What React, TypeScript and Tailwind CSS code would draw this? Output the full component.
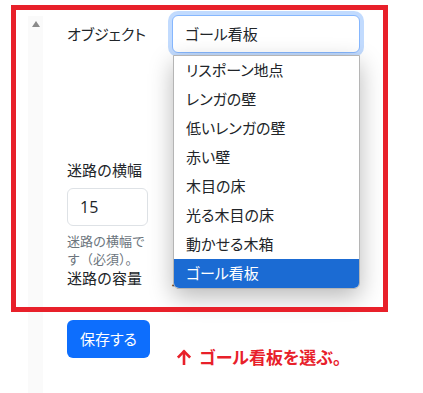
const items = [
  "リスポーン地点",
  "レンガの壁",
  "低いレンガの壁",
  "赤い壁",
  "木目の床",
  "光る木目の床",
  "動かせる木箱",
  "ゴール看板",
];

export default function App() {
  return (
    <div
      className="relative w-[423px] h-[393px] bg-white overflow-hidden text-[#212529]"
      style={{ fontFamily: '"Noto Sans CJK JP", "Noto Sans", sans-serif' }}
    >
      {/* scrollbar strip */}
      <div className="absolute left-[28px] top-[16px] bottom-0 w-[15px] bg-[#fafafa] flex justify-center pt-[5px]">
        <div className="w-0 h-0 border-l-[4px] border-r-[4px] border-b-[6px] border-l-transparent border-r-transparent border-b-[#8a8a8a]" />
      </div>

      <div className="flex flex-col pl-[67px] pt-[15px]">
        {/* object select */}
        <div className="flex items-center h-[38px]">
          <div className="w-[105px] text-[15px] [font-feature-settings:'palt']">オブジェクト</div>
          <div className="w-[188px] h-[38px] flex items-center px-[12px] rounded-md border border-[#86b7fe] ring-4 ring-[#c2dbfe] bg-white text-[15px] [font-feature-settings:'palt']">
            ゴール看板
          </div>
        </div>

        {/* width */}
        <div className="flex mt-[107px]">
          <div className="w-[105px] flex flex-col">
            <div className="text-[15px] leading-[20px]">迷路の横幅</div>
            <div className="mt-[8px] w-[81px] h-[38px] rounded-md border border-[#dee2e6] flex items-center px-[12px] text-[16px]" style={{ fontFamily: '"Open Sans", sans-serif' }}>
              15
            </div>
            <div className="w-[82px] mt-[6px] text-[13px] leading-[18px] text-[#6c757d]">
              迷路の横幅です（必須）。
            </div>
          </div>
          <div className="w-[188px] h-[55px] -mt-[10px] border-r border-[#3a9ab5]" />
        </div>

        {/* capacity */}
        <div className="flex items-start h-[20px]">
          <div className="w-[105px] text-[15px] leading-[20px]">迷路の容量</div>
          <div className="text-[15px] leading-[20px] mt-[5px]" style={{ fontFamily: '"Open Sans", sans-serif' }}>432 / 3072</div>
        </div>

        {/* save + annotation */}
        <div className="flex items-start mt-[32px]">
          <button className="w-[83px] h-[38px] rounded-md bg-[#0d6efd] text-white text-[15px] [font-feature-settings:'palt']">
            保存する
          </button>
          <div className="ml-[27px] mt-[26px] flex items-center gap-[8px] text-[#e8202a] text-[17px] font-bold leading-[22px] [font-feature-settings:'palt']">
            <svg width="14" height="16" viewBox="0 0 14 16" fill="none" stroke="#e8202a" strokeWidth="2.6" strokeLinecap="square">
              <path d="M7 15V3" />
              <path d="M1.8 7.6L7 2.4l5.2 5.2" />
            </svg>
            <span>ゴール看板を選ぶ。</span>
          </div>
        </div>
      </div>

      {/* open dropdown */}
      <div className="absolute left-[173px] top-[55px] w-[187px] bg-white border border-[#b5b5b5] rounded-b-md overflow-hidden shadow-[0_8px_24px_rgba(0,0,0,0.28)] text-[15px] [font-feature-settings:'palt']">
        {items.map((it, i) => (
          <div
            key={it}
            className={
              i === items.length - 1
                ? "h-[29px] flex items-center pl-[12px] bg-[#1b6bd3] text-white"
                : "h-[29px] flex items-center pl-[12px]"
            }
          >
            {it}
          </div>
        ))}
      </div>

      {/* red annotation frame */}
      <div className="absolute left-[11px] top-[5px] w-[377px] h-[307px] border-[5px] border-[#e8202a] pointer-events-none" />
    </div>
  );
}
